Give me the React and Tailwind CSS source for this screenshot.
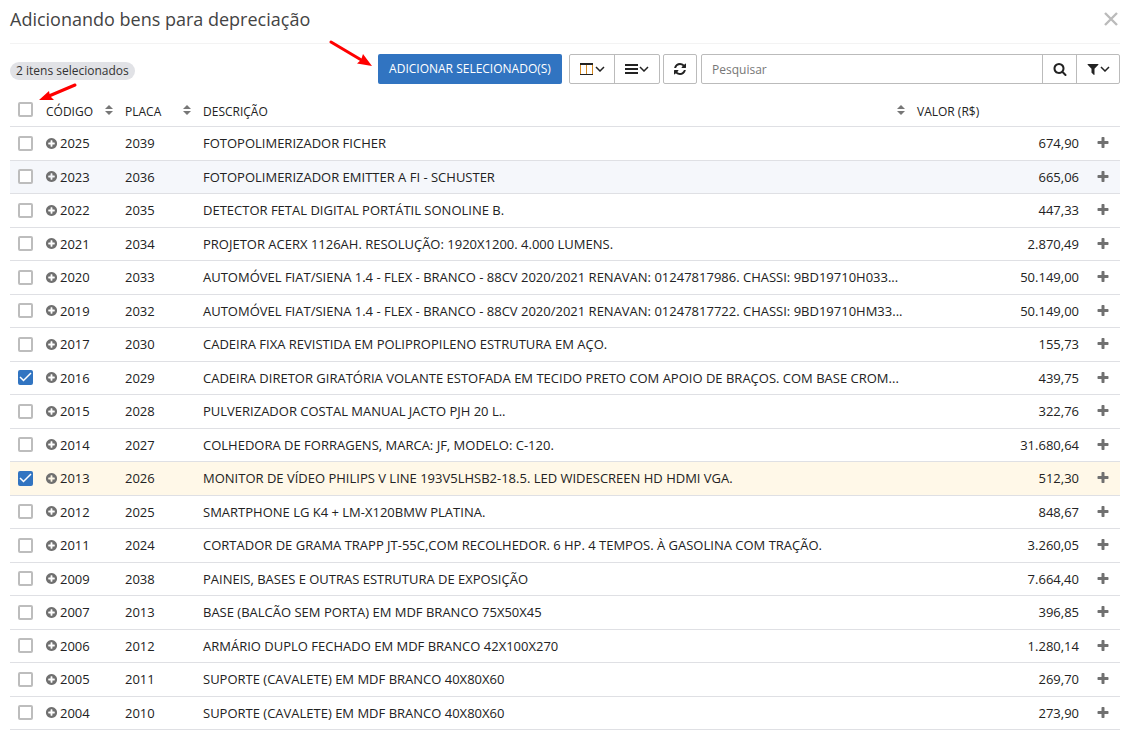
import React, { useState } from "react";

const initialItems = [
  { code: "2025", plate: "2039", name: "FOTOPOLIMERIZADOR FICHER", value: "674,90" },
  { code: "2023", plate: "2036", name: "FOTOPOLIMERIZADOR EMITTER A FI - SCHUSTER", value: "665,06", tone: "hover" },
  { code: "2022", plate: "2035", name: "DETECTOR FETAL DIGITAL PORTÁTIL SONOLINE B.", value: "447,33" },
  { code: "2021", plate: "2034", name: "PROJETOR ACERX 1126AH. RESOLUÇÃO: 1920X1200. 4.000 LUMENS.", value: "2.870,49" },
  { code: "2020", plate: "2033", name: "AUTOMÓVEL FIAT/SIENA 1.4 - FLEX - BRANCO - 88CV 2020/2021 RENAVAN: 01247817986. CHASSI: 9BD19710H033...", value: "50.149,00" },
  { code: "2019", plate: "2032", name: "AUTOMÓVEL FIAT/SIENA 1.4 - FLEX - BRANCO - 88CV 2020/2021 RENAVAN: 01247817722. CHASSI: 9BD19710HM33...", value: "50.149,00" },
  { code: "2017", plate: "2030", name: "CADEIRA FIXA REVISTIDA EM POLIPROPILENO ESTRUTURA EM AÇO.", value: "155,73" },
  { code: "2016", plate: "2029", name: "CADEIRA DIRETOR GIRATÓRIA VOLANTE ESTOFADA EM TECIDO PRETO COM APOIO DE BRAÇOS. COM BASE CROM...", value: "439,75" },
  { code: "2015", plate: "2028", name: "PULVERIZADOR COSTAL MANUAL JACTO PJH 20 L..", value: "322,76" },
  { code: "2014", plate: "2027", name: "COLHEDORA DE FORRAGENS, MARCA: JF, MODELO: C-120.", value: "31.680,64" },
  { code: "2013", plate: "2026", name: "MONITOR DE VÍDEO PHILIPS V LINE 193V5LHSB2-18.5. LED WIDESCREEN HD HDMI VGA.", value: "512,30", tone: "active" },
  { code: "2012", plate: "2025", name: "SMARTPHONE LG K4 + LM-X120BMW PLATINA.", value: "848,67" },
  { code: "2011", plate: "2024", name: "CORTADOR DE GRAMA TRAPP JT-55C,COM RECOLHEDOR. 6 HP. 4 TEMPOS. À GASOLINA COM TRAÇÃO.", value: "3.260,05" },
  { code: "2009", plate: "2038", name: "PAINEIS, BASES E OUTRAS ESTRUTURA DE EXPOSIÇÃO", value: "7.664,40" },
  { code: "2007", plate: "2013", name: "BASE (BALCÃO SEM PORTA) EM MDF BRANCO 75X50X45", value: "396,85" },
  { code: "2006", plate: "2012", name: "ARMÁRIO DUPLO FECHADO EM MDF BRANCO 42X100X270", value: "1.280,14" },
  { code: "2005", plate: "2011", name: "SUPORTE (CAVALETE) EM MDF BRANCO 40X80X60", value: "269,70" },
  { code: "2004", plate: "2010", name: "SUPORTE (CAVALETE) EM MDF BRANCO 40X80X60", value: "273,90" },
];

const rowTones = {
  hover: "bg-[#f5f7fb]",
  active: "bg-[#fff8e8]",
};

const paths = {
  plus: "M1600 736v192q0 40-28 68t-68 28h-416v416q0 40-28 68t-68 28h-192q-40 0-68-28t-28-68v-416h-416q-40 0-68-28t-28-68v-192q0-40 28-68t68-28h416v-416q0-40 28-68t68-28h192q40 0 68 28t28 68v416h416q40 0 68 28t28 68z",
  plusCircle:
    "M1344 960v-128q0-26-19-45t-45-19h-256v-256q0-26-19-45t-45-19h-128q-26 0-45 19t-19 45v256h-256q-26 0-45 19t-19 45v128q0 26 19 45t45 19h256v256q0 26 19 45t45 19h128q26 0 45-19t19-45v-256h256q26 0 45-19t19-45zm320-64q0 209-103 385.500t-279.500 279.500-385.500 103-385.500-103-279.500-279.500-103-385.500 103-385.500 279.500-279.500 385.500-103 385.500 103 279.500 279.500 103 385.500z",
  search:
    "M1216 832q0-185-131.500-316.500t-316.500-131.500-316.500 131.500-131.500 316.500 131.500 316.500 316.500 131.500 316.500-131.500 131.500-316.500zm512 832q0 52-38 90t-90 38q-54 0-90-38l-343-342q-179 124-399 124-143 0-273.500-55.500t-225-150-150-225-55.500-273.500 55.500-273.500 150-225 225-150 273.500-55.500 273.500 55.500 225 150 150 225 55.500 273.500q0 220-124 399l343 343q37 37 37 90z",
  filter:
    "M1595 295q17 41-14 70l-493 493v742q0 42-39 59-13 5-25 5-27 0-45-19l-256-256q-19-19-19-45v-486l-493-493q-31-29-14-70 17-39 59-39h1280q42 0 59 39z",
  refresh:
    "M1639 1056q0 5-1 7-64 268-268 434.500t-478 166.500q-146 0-282.500-55t-243.500-157l-129 129q-19 19-45 19t-45-19-19-45v-448q0-26 19-45t45-19h448q26 0 45 19t19 45-19 45l-137 137q71 66 161 102t187 36q134 0 250-65t186-179q11-17 53-117 8-23 30-23h192q13 0 22.500 9.500t9.500 22.500zm25-800v448q0 26-19 45t-45 19h-448q-26 0-45-19t-19-45 19-45l138-138q-148-137-349-137-134 0-250 65t-186 179q-11 17-53 117-8 23-30 23h-199q-13 0-22.500-9.500t-9.500-22.500v-7q65-268 270-434.500t480-166.500q146 0 284 55.500t245 156.500l130-129q19-19 45-19t45 19 19 45z",
};

const Icon = ({ name, className }) => (
  <svg viewBox="0 0 1792 1792" fill="currentColor" className={className} aria-hidden="true">
    <path d={paths[name]} />
  </svg>
);

const Chevron = () => (
  <svg viewBox="0 0 10 6" className="h-[6px] w-[10px]" fill="none" stroke="currentColor" strokeWidth="1.5" aria-hidden="true">
    <path d="M1 1l4 4 4-4" />
  </svg>
);

const ColumnsIcon = () => (
  <svg viewBox="0 0 13 12" className="h-3 w-[13px]" aria-hidden="true">
    <path d="M0.500 1v10M6.500 1v10M12.500 1v10" stroke="#d98a1f" strokeWidth="1" fill="none" />
    <path d="M0 0h13v2h-13zM0 11h13v1h-13z" fill="#222" />
  </svg>
);

const BarsIcon = () => (
  <svg viewBox="0 0 13 10" className="h-[10px] w-[13px]" fill="currentColor" aria-hidden="true">
    <path d="M0 0h13v2h-13zM0 4h13v2h-13zM0 8h13v2h-13z" />
  </svg>
);

const SortIcon = () => (
  <svg viewBox="0 0 8 10" className="mb-1 h-[10px] w-2 text-[#777]" fill="currentColor" aria-hidden="true">
    <path d="M0 4l4-4 4 4zM0 6h8l-4 4z" />
  </svg>
);

const Checkbox = ({ label, checked, onChange }) => (
  <span className="relative block size-[15px]">
    <input
      type="checkbox"
      aria-label={label}
      checked={checked}
      onChange={onChange}
      className="peer block size-[15px] appearance-none rounded-[2px] border-2 border-[#bdbdbd] bg-white checked:border-[#3174c1] checked:bg-[#3174c1]"
    />
    <svg
      viewBox="0 0 15 15"
      className="pointer-events-none absolute inset-0 hidden size-[15px] peer-checked:block"
      fill="none"
      stroke="#fff"
      strokeWidth="1.5"
      aria-hidden="true"
    >
      <path d="M2 7l3.500 3.500 7.500-7.500" />
    </svg>
  </span>
);

// Header
const Header = () => (
  <header className="flex h-11 items-center justify-between border-b border-[#f3f3f3] pb-[5px]">
    <h1 className="text-[18px] leading-6 text-[#444]">Adicionando bens para depreciação</h1>
    <button type="button" aria-label="Fechar" className="p-[2px] text-[#bbb]">
      <svg viewBox="0 0 14 14" className="size-[14px]" fill="none" stroke="currentColor" strokeWidth="2.400" aria-hidden="true">
        <path d="M1 1l12 12M13 1L1 13" />
      </svg>
    </button>
  </header>
);

// Toolbar with the bulk action, view options and search
const Toolbar = ({ count }) => {
  const [query, setQuery] = useState("");

  return (
    <div className="mt-[10px] flex items-start justify-between">
      <span className="mt-2 rounded-full bg-[#e1e2e6] px-[6px] text-[12px] leading-[18px] text-[#333]">
        {count} itens selecionados
      </span>
      <div className="flex h-[30px] w-2/3 min-w-0 text-[#222] lg:w-[742px]">
        <div className="relative mr-[7px] shrink-0">
          <button
            type="button"
            className="h-full w-[184px] rounded-[2px] bg-[#3174c1] text-[12px] whitespace-nowrap text-white"
          >
            ADICIONAR SELECIONADO(S)
          </button>
          <svg viewBox="0 0 44 28" className="absolute -top-[15px] right-full mr-[5px] h-7 w-11" aria-hidden="true">
            <path d="M2 3L34 22" stroke="#f00" strokeWidth="3" strokeLinecap="round" />
            <path d="M43 27L28 24.500 32 21 34 15z" fill="#f00" />
          </svg>
        </div>
        <div className="mr-[3px] flex shrink-0 divide-x divide-[#bbb] rounded-[2px] border border-[#bbb]">
          <button type="button" aria-label="Colunas" className="flex w-[45px] items-center justify-center gap-[2px]">
            <ColumnsIcon />
            <Chevron />
          </button>
          <button type="button" aria-label="Opções" className="flex w-[44px] items-center justify-center gap-[1px]">
            <BarsIcon />
            <Chevron />
          </button>
        </div>
        <button
          type="button"
          aria-label="Atualizar"
          className="mr-1 flex w-[34px] shrink-0 items-center justify-center rounded-[2px] border border-[#bbb]"
        >
          <Icon name="refresh" className="size-[14px]" />
        </button>
        <div className="flex min-w-0 flex-1 divide-x divide-[#bbb] rounded-[2px] border border-[#bbb]">
          <input
            type="text"
            aria-label="Pesquisar"
            placeholder="Pesquisar"
            value={query}
            onChange={(e) => setQuery(e.target.value)}
            className="min-w-0 flex-1 px-[10px] pt-[2px] text-[12px] outline-none placeholder:text-[#777]"
          />
          <button type="button" aria-label="Buscar" className="flex w-[34px] shrink-0 items-center justify-center">
            <Icon name="search" className="size-[14px]" />
          </button>
          <button type="button" aria-label="Filtrar" className="flex w-[42px] shrink-0 items-center justify-center">
            <Icon name="filter" className="size-[14px]" />
            <Chevron />
          </button>
        </div>
      </div>
    </div>
  );
};

const ItemRow = ({ item, checked, onToggle }) => (
  <tr className={`border-b border-[#dfe0e4] odd:h-[34px] even:h-[33px] ${rowTones[item.tone] || ""}`}>
    <td className="pl-2">
      <Checkbox label={`Selecionar ${item.code}`} checked={checked} onChange={onToggle} />
    </td>
    <td className="pl-[7px]">
      <span className="flex items-center gap-[2px]">
        <Icon name="plusCircle" className="size-[13px] text-[#707070]" />
        {item.code}
      </span>
    </td>
    <td className="pl-2">{item.plate}</td>
    <td className="pl-2 whitespace-nowrap">{item.name}</td>
    <td className="pr-2 text-right">{item.value}</td>
    <td className="pr-[2px]">
      <button type="button" aria-label={`Adicionar ${item.code}`} className="mx-auto block text-[#707070]">
        <Icon name="plus" className="size-[14px]" />
      </button>
    </td>
  </tr>
);

const ItemsTable = ({ selected, setSelected }) => {
  const allSelected = selected.length === initialItems.length;

  const toggle = (code) => {
    setSelected(
      selected.includes(code) ? selected.filter((c) => c !== code) : [...selected, code]
    );
  };

  return (
    <table className="mt-2 w-full table-fixed border-collapse text-[13px] leading-[18px] text-[#222]">
      <colgroup>
        <col className="w-7" />
        <col className="w-[79px]" />
        <col className="w-[78px]" />
        <col />
        <col className="w-[178px]" />
        <col className="w-[33px]" />
      </colgroup>
      <thead>
        <tr className="h-[34px] border-b border-[#dfe0e4] text-left text-[12px]">
          <th className="pt-[2px] pl-2">
            <div className="relative">
              <Checkbox
                label="Selecionar todos"
                checked={allSelected}
                onChange={() => setSelected(allSelected ? [] : initialItems.map((i) => i.code))}
              />
              <svg viewBox="0 0 40 18" className="absolute bottom-4 left-5 h-[18px] w-10 max-w-none" aria-hidden="true">
                <path d="M37 2L11 13" stroke="#f00" strokeWidth="3" strokeLinecap="round" />
                <path d="M1 17L11 8 12 13 16 17z" fill="#f00" />
              </svg>
            </div>
          </th>
          {["CÓDIGO", "PLACA", "DESCRIÇÃO"].map((title) => (
            <th key={title} className="pt-[6px] pr-1 pl-2 font-medium">
              <div className="flex items-center justify-between">
                <span>{title}</span>
                <SortIcon />
              </div>
            </th>
          ))}
          <th className="pt-[6px] pl-2 font-medium">VALOR (R$)</th>
          <td></td>
        </tr>
      </thead>
      <tbody>
        {initialItems.map((item) => (
          <ItemRow
            key={item.code}
            item={item}
            checked={selected.includes(item.code)}
            onToggle={() => toggle(item.code)}
          />
        ))}
      </tbody>
    </table>
  );
};

const App = () => {
  const [selected, setSelected] = useState(["2016", "2013"]);

  return (
    <main className="bg-white pr-[11px] pl-[10px] font-['Open_Sans',sans-serif]">
      <Header />
      <Toolbar count={selected.length} />
      <ItemsTable selected={selected} setSelected={setSelected} />
    </main>
  );
};

export default App;
